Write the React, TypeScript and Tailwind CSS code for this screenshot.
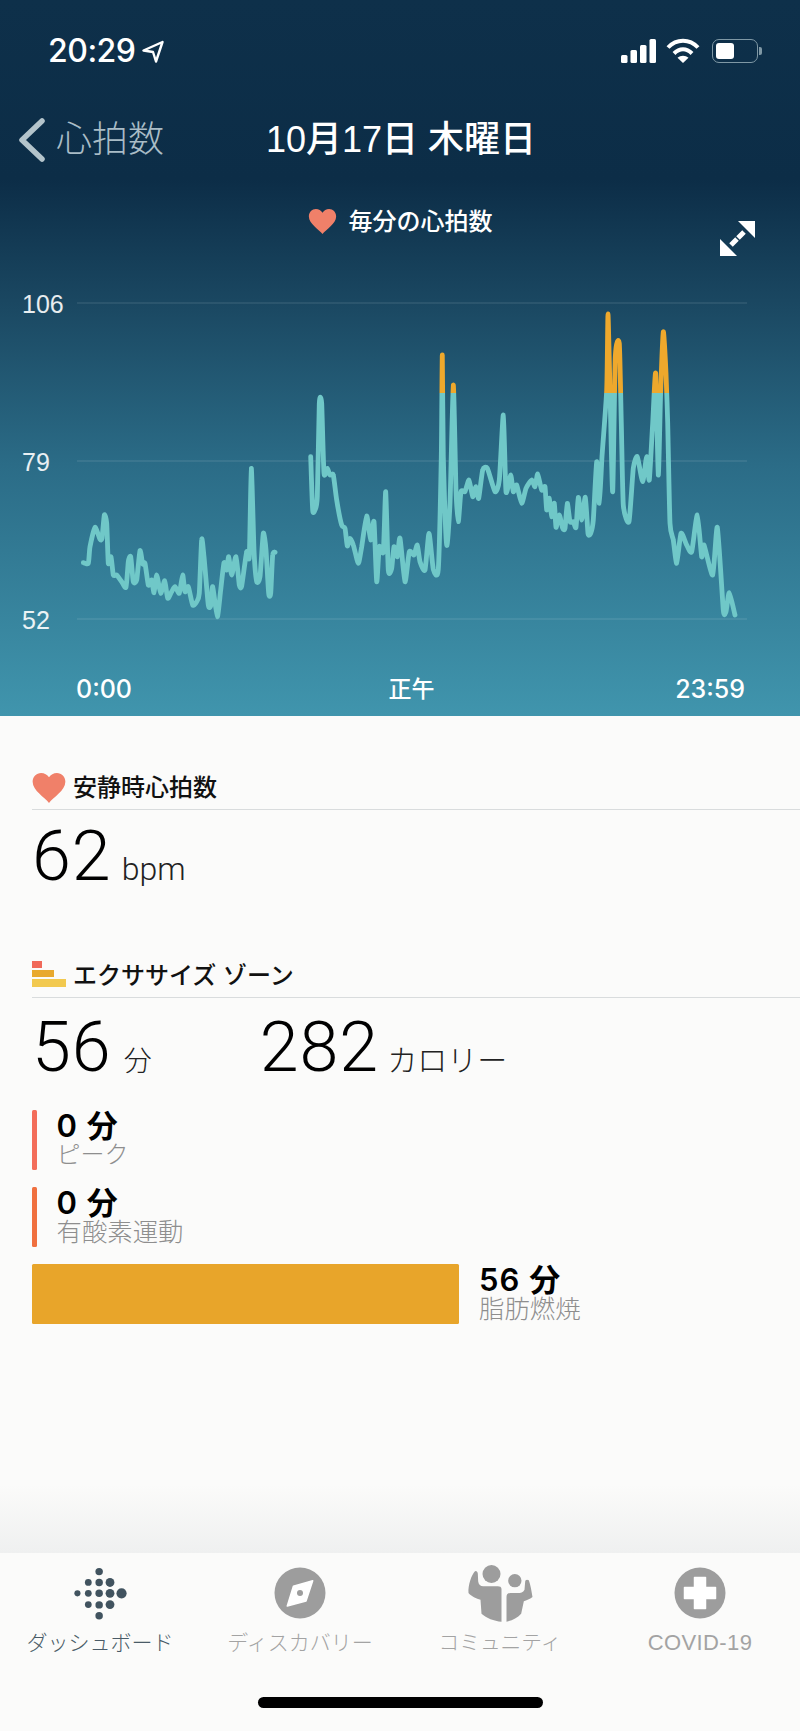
import React from "react";

// traced from the chart: [x, y] at 3x, x relative to 0 and y relative to 290
const leftTrace = [
  [250, 818], [265, 820], [270, 770], [285, 712], [300, 748], [306, 745], [313, 675], [320, 700], [325, 820], [333, 800],
  [340, 855], [350, 855], [365, 875], [378, 892], [385, 815], [392, 800], [400, 875], [410, 870], [420, 782], [428, 822],
  [435, 820], [445, 885], [455, 870], [462, 908], [470, 855], [482, 910], [494, 872], [503, 925], [515, 905], [525, 890],
  [538, 910], [548, 855], [555, 905], [565, 890], [578, 945], [590, 935], [598, 910], [605, 748], [612, 800], [625, 945],
  [633, 945], [638, 890], [652, 980], [662, 900], [672, 818], [680, 840], [686, 800], [695, 855], [708, 800], [718, 885],
  [725, 888], [740, 785], [748, 800], [754, 535], [762, 780], [770, 875], [780, 860], [790, 730], [798, 780], [806, 910],
  [812, 910], [818, 795], [825, 787],
];

const rightTrace = [
  [932, 500], [938, 660], [945, 660], [952, 620], [958, 340], [965, 340], [972, 550], [982, 535], [990, 555], [1000, 555],
  [1010, 630], [1025, 705], [1035, 715], [1042, 768], [1050, 745], [1060, 765], [1075, 820], [1085, 770], [1100, 678],
  [1112, 750], [1122, 695], [1130, 875], [1138, 770], [1150, 785], [1157, 605], [1165, 840], [1175, 835], [1182, 770],
  [1192, 800], [1200, 745], [1215, 875], [1228, 785], [1242, 795], [1252, 765], [1260, 815], [1275, 840], [1287, 730],
  [1300, 838], [1315, 838], [1324, 500], [1327, 195], [1330, 500], [1340, 765], [1350, 640], [1360, 285], [1368, 600],
  [1375, 695], [1383, 605], [1395, 605], [1407, 570], [1418, 620], [1428, 590], [1436, 625], [1448, 540], [1462, 535],
  [1485, 605], [1498, 570], [1510, 375], [1518, 605], [1532, 555], [1540, 605], [1550, 585], [1565, 640], [1578, 595],
  [1595, 570], [1605, 590], [1613, 552], [1625, 600], [1635, 590], [1640, 660], [1648, 625], [1655, 680], [1663, 640],
  [1668, 712], [1678, 675], [1688, 715], [1695, 715], [1702, 640], [1710, 695], [1720, 695], [1728, 712], [1735, 622],
  [1745, 690], [1756, 622], [1764, 730], [1772, 730], [1780, 690], [1790, 515], [1798, 640], [1806, 500], [1820, 300],
  [1824, 72], [1830, 300], [1838, 605], [1846, 200], [1858, 160], [1864, 400], [1870, 645], [1887, 695], [1900, 535],
  [1912, 500], [1928, 575], [1940, 500], [1948, 570], [1958, 400], [1967, 250], [1975, 555], [1982, 300], [1990, 125],
  [1998, 250], [2003, 400], [2010, 700], [2020, 750], [2030, 820], [2043, 730], [2060, 765], [2075, 785], [2092, 675],
  [2105, 800], [2112, 765], [2138, 855], [2152, 712], [2170, 960], [2178, 965], [2188, 908], [2205, 975],
];

// catmull-rom through the traced points, the app's line is rounded
const toPath = (trace: number[][]) => {
  const pts = trace.map(([x, y]) => [x / 3, 290 + y / 3]);
  let d = `M${pts[0][0].toFixed(1)} ${pts[0][1].toFixed(1)}`;
  for (let i = 0; i < pts.length - 1; i++) {
    const p0 = pts[Math.max(i - 1, 0)];
    const p1 = pts[i];
    const p2 = pts[i + 1];
    const p3 = pts[Math.min(i + 2, pts.length - 1)];
    const c1 = [p1[0] + (p2[0] - p0[0]) / 10, p1[1] + (p2[1] - p0[1]) / 10];
    const c2 = [p2[0] - (p3[0] - p1[0]) / 10, p2[1] - (p3[1] - p1[1]) / 10];
    d += `C${c1[0].toFixed(1)} ${c1[1].toFixed(1)} ${c2[0].toFixed(1)} ${c2[1].toFixed(1)} ${p2[0].toFixed(1)} ${p2[1].toFixed(1)}`;
  }
  return d;
};

const fitbitDots = [
  [231, 191, 9], [263, 159, 10], [263, 191, 10], [263, 224, 10], [295, 127, 11], [295, 159, 11], [295, 191, 11],
  [295, 225, 11], [295, 257, 11], [327, 159, 13], [327, 191, 13], [327, 224, 13], [361, 191, 15],
];

function Heart({ className }: { className: string }) {
  return (
    <svg viewBox="0 0 24 22" className={className} fill="#f08069">
      <path d="M12 22C9 18 0 13 0 6.5 0 2.8 2.8 0 6.2 0 8.6 0 10.8 1.3 12 3.2 13.2 1.3 15.4 0 17.8 0 21.2 0 24 2.8 24 6.5 24 13 15 18 12 22Z" />
    </svg>
  );
}

function StatusBar() {
  return (
    <div className="flex h-[100px] items-start justify-between pl-[48px] pr-[38px] pt-[36px] text-white">
      <div className="flex items-center gap-[7px]">
        <span className="font-['Inter',sans-serif] text-[32px] leading-[30px] font-medium tracking-[-0.5px]">20:29</span>
        <svg viewBox="0 0 22 23" className="h-[23px] w-[22px]" fill="none" stroke="white" strokeWidth="2.4" strokeLinejoin="round">
          <path d="M20.5 2 1.5 10.5 11 12 14 21.5Z" />
        </svg>
      </div>
      <div className="flex items-center gap-[10px] pt-[2px]">
        <svg viewBox="0 0 35 24" className="h-[24px] w-[35px]" fill="white">
          <rect x="0" y="16" width="6.5" height="8" rx="1.5" />
          <rect x="9.5" y="11" width="6.5" height="13" rx="1.5" />
          <rect x="19" y="6" width="6.5" height="18" rx="1.5" />
          <rect x="28.5" y="0" width="6.5" height="24" rx="1.5" />
        </svg>
        <svg viewBox="0 0 34 25" className="h-[25px] w-[34px]" fill="none" stroke="white" strokeWidth="4">
          <path d="M2 9.5C10.5 0.5 23.5 0.5 32 9.5" />
          <path d="M8 15.5C13.5 9.8 20.5 9.8 26 15.5" />
          <path d="M17 25 11.5 19.8C14.5 17 19.5 17 22.5 19.8Z" fill="white" stroke="none" />
        </svg>
        <div className="ml-[2px] flex items-center gap-[1px]">
          <div className="flex h-[24px] w-[46px] items-center rounded-[7px] border-[1.5px] border-[#7f98a5] px-[2.5px]">
            <div className="h-[16px] w-[18px] rounded-[3px] bg-white" />
          </div>
          <div className="h-[8px] w-[3px] rounded-r-[2px] bg-[#7f98a5]" />
        </div>
      </div>
    </div>
  );
}

function Chart() {
  return (
    <div className="flex h-[350px]">
      <div className="flex w-[77px] flex-col gap-[134px] pt-[2px] pl-[22px] text-[25px] leading-[24px] text-white/90">
        <span>106</span>
        <span>79</span>
        <span>52</span>
      </div>
      <svg viewBox="77 290 723 350" className="h-[350px] w-[723px]" fill="none">
        <defs>
          <linearGradient id="zone" gradientUnits="userSpaceOnUse" x1="0" y1="290" x2="0" y2="640">
            <stop offset="0.295" stopColor="#eea82c" />
            <stop offset="0.295" stopColor="#70c8c8" />
          </linearGradient>
        </defs>
        <g stroke="#ffffff" strokeOpacity="0.16" strokeWidth="1">
          <line x1="77" y1="303" x2="747" y2="303" />
          <line x1="77" y1="461" x2="747" y2="461" />
          <line x1="77" y1="619" x2="747" y2="619" />
        </g>
        <g stroke="url(#zone)" strokeWidth="4.8" strokeLinejoin="round" strokeLinecap="round">
          <path d={toPath(leftTrace)} />
          <path d={toPath(rightTrace)} />
        </g>
      </svg>
    </div>
  );
}

function Header() {
  return (
    <header className="h-[716px] shrink-0 bg-[linear-gradient(180deg,#0e304a_0%,#0c2d47_25%,#1a4761_42%,#2b6c87_65%,#4095ad_100%)] text-white">
      <StatusBar />
      <div className="grid h-[80px] grid-cols-[1fr_auto_1fr] items-center pl-[19px] pr-[17px]">
        <div className="flex items-center gap-[11px] text-[#a9bcc6]">
          <svg viewBox="0 0 26 44" className="h-[44px] w-[26px]" fill="none" stroke="#b4c4cb" strokeWidth="5.5" strokeLinecap="round" strokeLinejoin="round">
            <path d="M23 3 3 22 23 41" />
          </svg>
          <span className="text-[36px] leading-[40px] font-light">心拍数</span>
        </div>
        <span className="text-[36px] leading-[40px] font-medium">10月17日 木曜日</span>
        <span />
      </div>
      <div className="grid h-[110px] grid-cols-[1fr_auto_1fr] items-start px-[45px] pt-[29px]">
        <span />
        <div className="flex items-center gap-[12px] font-medium">
          <Heart className="h-[25px] w-[29px]" />
          <span className="text-[24px] leading-[24px]">毎分の心拍数</span>
        </div>
        <svg viewBox="0 0 35 35" className="mt-[12px] h-[35px] w-[35px] justify-self-end" fill="white" stroke="white">
          <path d="M35 0V17L18 0Z" stroke="none" />
          <path d="M0 35V18L17 35Z" stroke="none" />
          <path d="M24 11 18 17M11 24 17 18" strokeWidth="5" />
        </svg>
      </div>
      <Chart />
      <div className="grid grid-cols-3 items-center pt-[36px] pl-[76px] pr-[55px] font-['Inter','Noto_Sans_CJK_JP',sans-serif] text-[25px] leading-[26px] font-medium">
        <span>0:00</span>
        <span className="pl-[2px] text-center text-[23px]">正午</span>
        <span className="text-right">23:59</span>
      </div>
    </header>
  );
}

function SectionTitle({ icon, title }: { icon: React.ReactNode; title: string }) {
  return (
    <div className="ml-[32px] flex h-[38px] items-center gap-[7px] border-b border-[#d9dcdd] pb-[6px]">
      {icon}
      <span className="text-[24px] leading-[30px] font-medium text-[#111]">{title}</span>
    </div>
  );
}

function BigStat({ value, unit, unitClass }: { value: string; unit: string; unitClass: string }) {
  return (
    <div className="flex items-baseline">
      <span className="font-['Roboto',sans-serif] text-[70px] leading-[70px] font-light tracking-[1px] text-black">{value}</span>
      <span className={`${unitClass} leading-[34px] font-light text-[#222]`}>{unit}</span>
    </div>
  );
}

function ZoneRow({ value, label, labelClass, barClass, barColor }: { value: string; label: string; labelClass: string; barClass: string; barColor: string }) {
  return (
    <div className="flex h-[60px] items-start">
      <div className={`h-[60px] rounded-[1.5px] ${barClass} ${barColor}`} />
      <div className="ml-[20px] flex flex-col gap-[2px] pt-[2px]">
        <span className="font-['Inter','Noto_Sans_CJK_JP',sans-serif] text-[31px] leading-[28px] font-semibold tracking-[1px] text-black">{value}</span>
        <span className={`${labelClass} leading-[26px] font-light text-[#8e8e8e]`}>{label}</span>
      </div>
    </div>
  );
}

function Content() {
  return (
    <main className="flex flex-1 flex-col bg-[#fbfbfa]">
      <div className="pt-[56px]">
        <SectionTitle icon={<Heart className="h-[30px] w-[34px]" />} title="安静時心拍数" />
        <div className="mt-[11px] ml-[32px]">
          <BigStat value="62" unit="bpm" unitClass="ml-[10px] font-['Roboto',sans-serif] text-[32px]" />
        </div>
      </div>
      <div className="pt-[69px]">
        <SectionTitle
          icon={
            <div className="mb-[4px] flex w-[34px] flex-col gap-[2px]">
              <div className="h-[7px] w-[10px] bg-[#f0695a]" />
              <div className="h-[7px] w-[22px] bg-[#e8a92e]" />
              <div className="h-[8px] w-[34px] bg-[#f2c94f]" />
            </div>
          }
          title="エクササイズ ゾーン"
        />
        <div className="mt-[14px] ml-[32px] flex gap-[108px]">
          <BigStat value="56" unit="分" unitClass="ml-[12px] text-[28px]" />
          <BigStat value="282" unit="カロリー" unitClass="ml-[8px] text-[30px]" />
        </div>
      </div>
      <div className="mt-[28px] ml-[32px] flex flex-col gap-[17px]">
        <ZoneRow value="0 分" label="ピーク" labelClass="text-[24px]" barClass="w-[4.5px]" barColor="bg-[#f36d5a]" />
        <ZoneRow value="0 分" label="有酸素運動" labelClass="text-[25.4px]" barClass="w-[4.5px]" barColor="bg-[#f0703f]" />
        <ZoneRow value="56 分" label="脂肪燃焼" labelClass="text-[25.4px]" barClass="w-[427px]" barColor="bg-[#e8a52a]" />
      </div>
      <div className="flex-1" />
      <div className="h-[68px] bg-gradient-to-b from-[#fbfbfa] to-[#eff0f0]" />
    </main>
  );
}

function Tab({ label, active, icon, labelClass }: { label: string; active?: boolean; icon: React.ReactNode; labelClass?: string }) {
  return (
    <div className="flex flex-col items-center">
      <div className="flex h-[70px] w-[80px] items-center justify-center">{icon}</div>
      <span className={`mt-[2px] whitespace-nowrap leading-[26px] font-light ${labelClass ?? "text-[21px]"} ${active ? "text-[#4a5b67]" : "text-[#a3a3a3]"}`}>
        {label}
      </span>
    </div>
  );
}

function TabBar() {
  return (
    <footer className="flex h-[178px] shrink-0 flex-col bg-[#fbfbfa] pt-[5px]">
      <div className="grid grid-cols-4">
        <Tab
          active
          label="ダッシュボード"
          icon={
            <svg viewBox="215 105 165 170" className="h-[58px] w-[56px]" fill="#41535f">
              {fitbitDots.map(([cx, cy, r]) => (
                <circle key={`${cx}-${cy}`} cx={cx} cy={cy} r={r} />
              ))}
            </svg>
          }
        />
        <Tab
          label="ディスカバリー"
          icon={
            <svg viewBox="-26 -26 52 52" className="h-[52px] w-[52px]">
              <circle r="25.5" fill="#9d9d9d" />
              <path d="M12.7 -12.3 6 8 -12.7 13 -6.6 -6.7Z" fill="white" stroke="white" strokeWidth="1.5" strokeLinejoin="round" />
              <circle r="3" fill="#9d9d9d" />
            </svg>
          }
        />
        <Tab
          label="コミュニティ"
          labelClass="text-[20.7px]"
          icon={
            <svg viewBox="200 100 200 180" className="h-[60px] w-[67px]" fill="#9d9d9d">
              <circle cx="273" cy="133" r="27" />
              <circle cx="343" cy="153" r="20" />
              <path d="M222 126C214 135 202 165 204 190 212 200 228 207 240 210L243 252C258 265 280 274 303 276V178C303 172 298 170 292 170L248 170C240 170 234 165 233 155L232 132C231 125 226 122 222 126Z" />
              <path d="M318 276C335 272 350 265 362 252L370 215C378 212 388 208 396 202 393 185 390 165 385 152 380 148 374 150 374 156L372 180C368 188 360 190 352 190L330 190C322 190 318 194 318 202Z" />
            </svg>
          }
        />
        <Tab
          label="COVID-19"
          labelClass="text-[22px] tracking-[0.4px]"
          icon={
            <svg viewBox="-26 -26 52 52" className="h-[52px] w-[52px]">
              <circle r="25.5" fill="#9d9d9d" />
              <path d="M-5.5 -15.5H5.5V-5.5H15.5V5.5H5.5V15.5H-5.5V5.5H-15.5V-5.5H-5.5Z" fill="white" stroke="white" strokeWidth="1.5" strokeLinejoin="round" />
            </svg>
          }
        />
      </div>
      <div className="mx-auto mt-[41px] h-[11px] w-[285px] rounded-full bg-black" />
    </footer>
  );
}

export default function App() {
  return (
    <div className="flex h-[1731px] w-[800px] flex-col overflow-hidden font-['Liberation_Sans','Noto_Sans_CJK_JP',sans-serif]">
      <Header />
      <Content />
      <TabBar />
    </div>
  );
}
